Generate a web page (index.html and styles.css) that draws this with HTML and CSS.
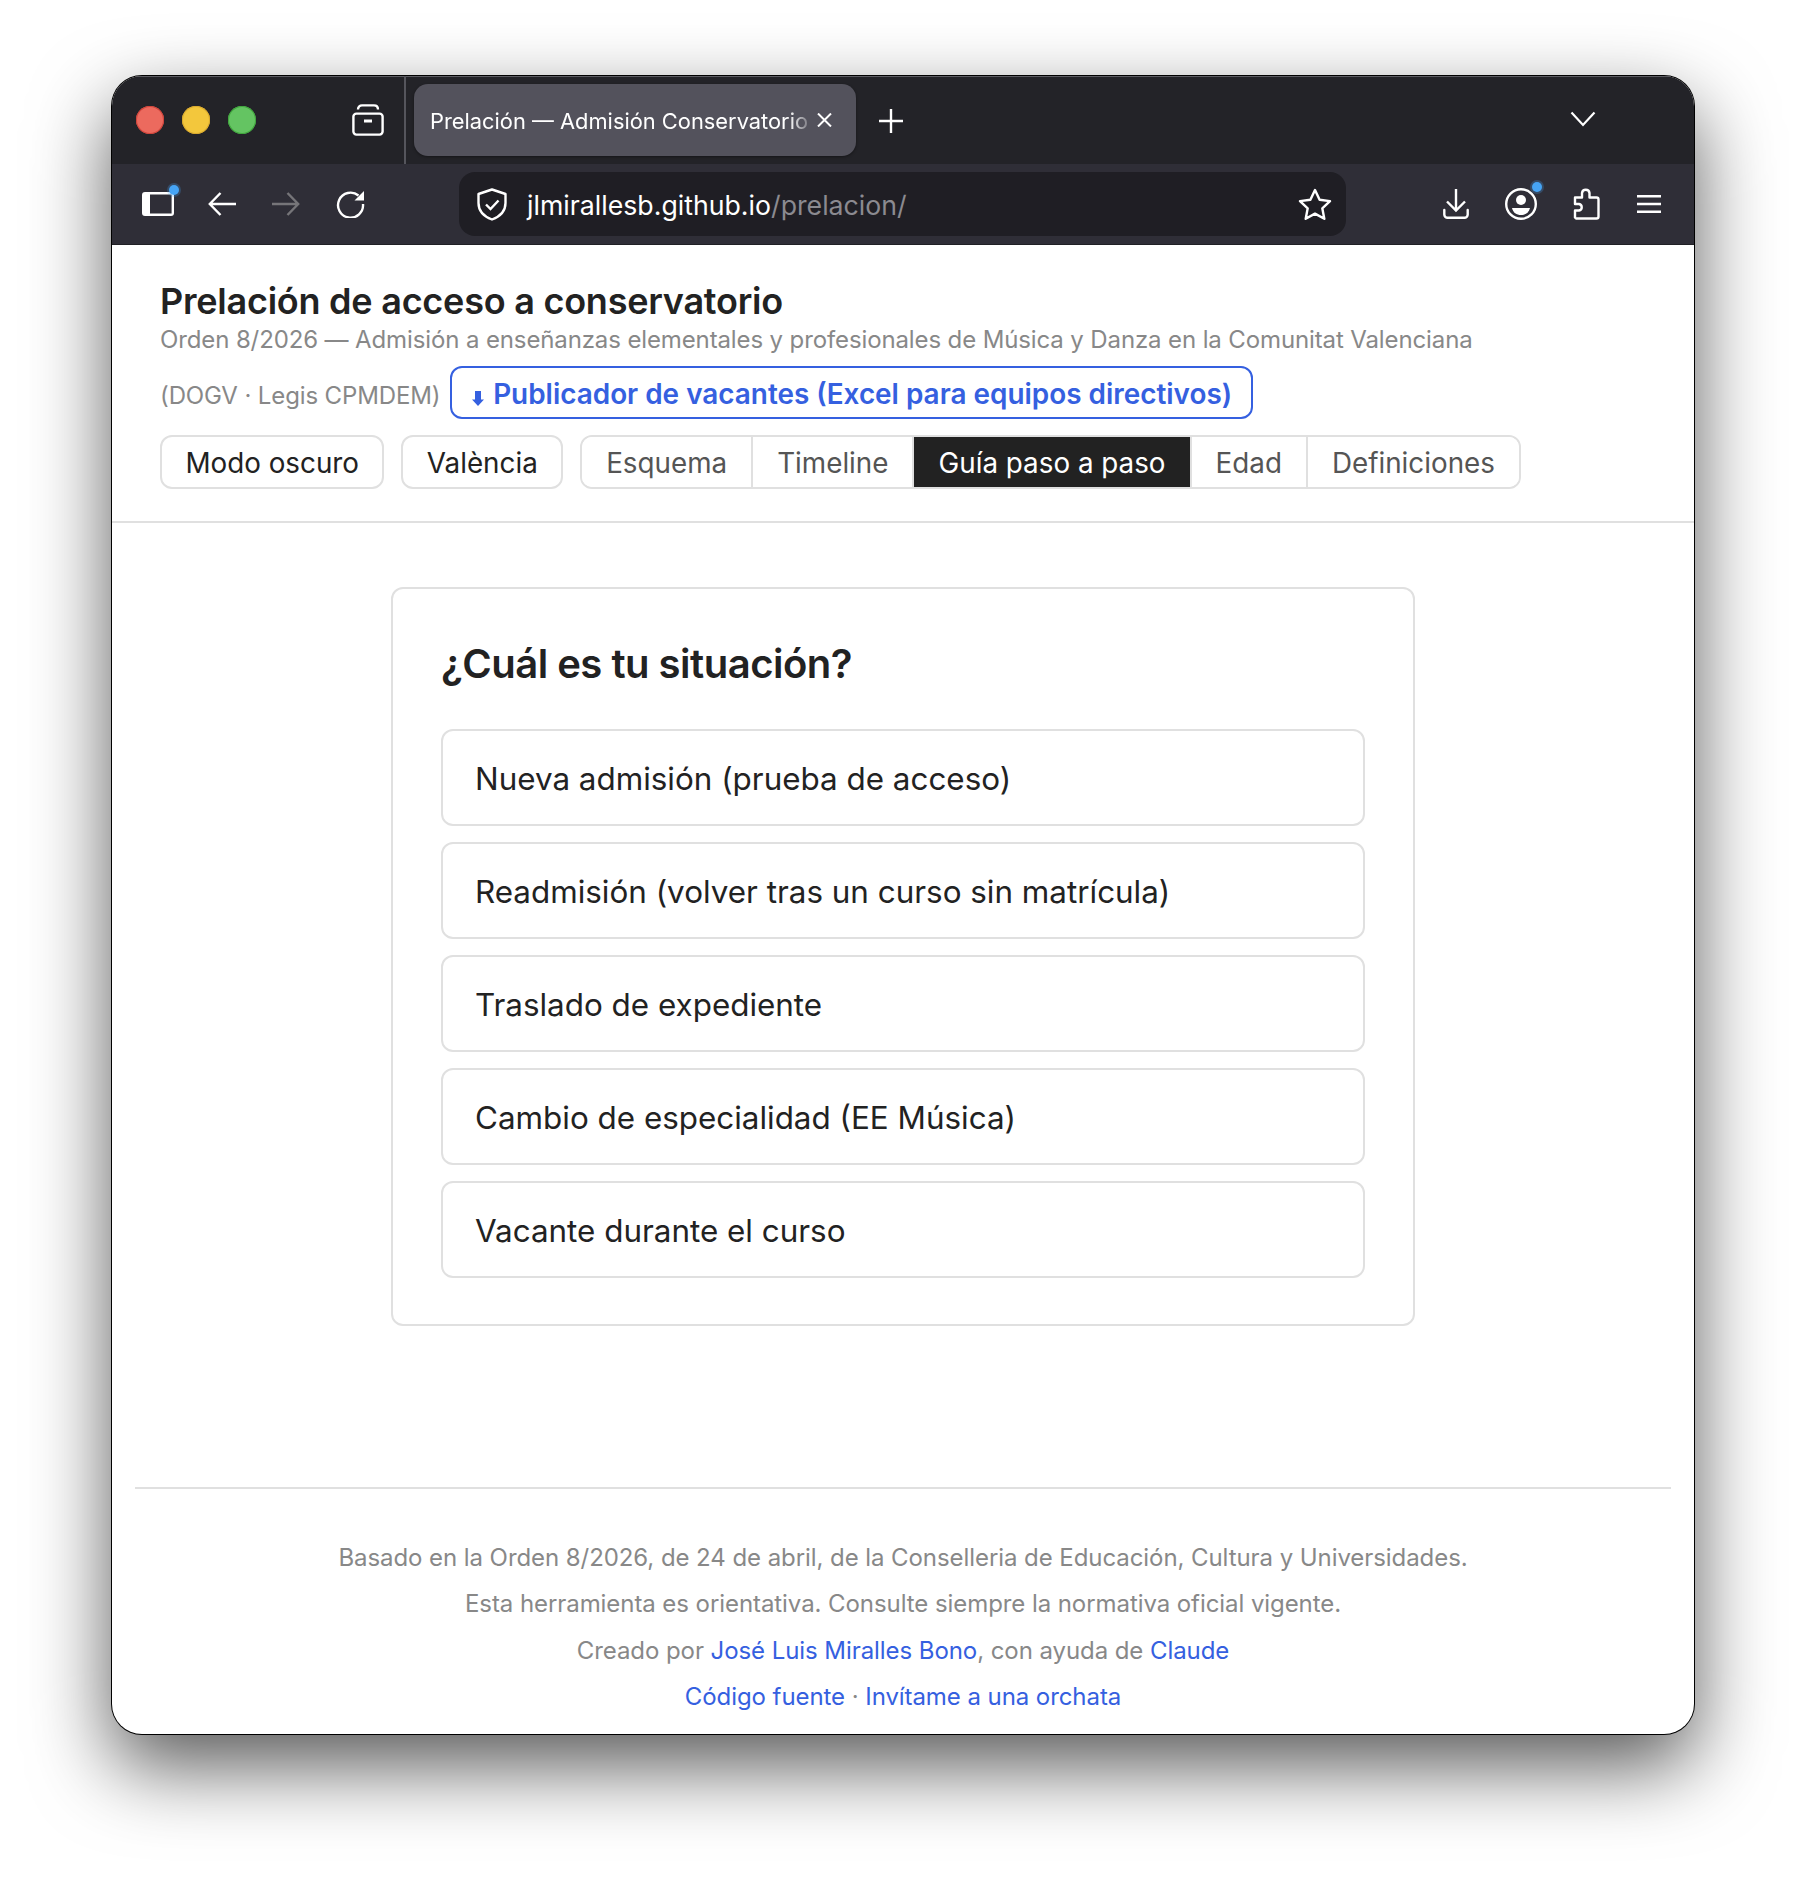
FILE: index.html
```html
<!DOCTYPE html>
<html lang="es">
<head>
<meta charset="utf-8">
<title>Prelación de acceso a conservatorio</title>
<link rel="stylesheet" href="styles.css">
</head>
<body>
<div class="window">
  <div class="tabbar">
    <div class="lights"><span class="light red"></span><span class="light yellow"></span><span class="light green"></span></div>
    <svg class="ico view" width="32" height="32" viewBox="0 0 32 32" fill="none" stroke="#fff" stroke-width="2.4"><path d="M6 5.500C6 2.500 8 1.400 10 1.400H22C24 1.400 26 2.500 26 5.500"/><rect x="1.400" y="9.600" width="29.200" height="21" rx="3"/><path d="M12 17h8" stroke-width="3"/></svg>
    <span class="sep"></span>
    <div class="tab">
      <span class="tab-title">Prelación — Admisión Conservatorio</span>
      <svg class="ico tab-x" width="15" height="14" viewBox="0 0 15 14" stroke="#fff" stroke-width="2"><path d="M1 .5l13 13M14 .5l-13 13"/></svg>
    </div>
    <svg class="ico plus" width="24" height="24" viewBox="0 0 24 24" stroke="#fff" stroke-width="2.400"><path d="M12 0v24M0 12h24"/></svg>
    <svg class="ico chev" width="26" height="16" viewBox="0 0 26 16" fill="none" stroke="#fff" stroke-width="2.200"><path d="M1.500 1.500L13 14 24.500 1.500"/></svg>
  </div>
  <div class="toolbar">
    <span class="badged sidebar">
      <svg class="ico" width="32" height="24" viewBox="0 0 32 24"><path fill="#fff" fill-rule="evenodd" d="M3 0H29a3 3 0 0 1 3 3V21a3 3 0 0 1-3 3H3a3 3 0 0 1-3-3V3a3 3 0 0 1 3-3ZM8 2.400V21.600H29.600V2.400Z"/></svg>
      <span class="dot"></span>
    </span>
    <svg class="ico back" width="28" height="24" viewBox="0 0 28 24" fill="none" stroke="#fff" stroke-width="2.400"><path d="M28 12H2M12.500 1L1.800 12 12.500 23"/></svg>
    <svg class="ico fwd" width="28" height="24" viewBox="0 0 28 24" fill="none" stroke="#767579" stroke-width="2.400"><path d="M0 12H26M15.500 1L26.200 12 15.500 23"/></svg>
    <svg class="ico reload" width="29" height="28" viewBox="0 0 29 28" fill="none"><path d="M22.500 5.500A12.500 12.500 0 1 0 27 14" stroke="#fff" stroke-width="2.400"/><path d="M28 1V10.500H18.500Z" fill="#fff"/></svg>
    <div class="urlbar">
      <svg class="ico" width="30" height="33" viewBox="0 0 30 33" fill="none" stroke="#fff" stroke-width="2.400"><path d="M15 1.500L28.500 6V15C28.500 23 23 28.500 15 31.500 7 28.500 1.500 23 1.500 15V6Z" stroke-linejoin="round"/><path d="M9 16.500l4.500 4.500 8-8.500"/></svg>
      <span class="url"><span class="host">jlmirallesb.github.io</span><span class="path">/prelacion/</span></span>
      <svg class="ico star" width="34" height="32" viewBox="0 0 34 32" fill="none" stroke="#fff" stroke-width="2.400" stroke-linejoin="round"><path d="M17 2l4.600 9.800 10.400 1.300-7.700 7.200 2 10.500L17 25.600 7.700 30.800l2-10.500L2 13.100l10.400-1.300Z"/></svg>
    </div>
    <svg class="ico dl" width="26" height="30" viewBox="0 0 26 30" fill="none" stroke="#fff" stroke-width="2.400"><path d="M13 0V21M4 12.500L13 21.500 22 12.500"/><path d="M1.300 21V25.500A3.300 3.300 0 0 0 4.600 28.800H21.400A3.300 3.300 0 0 0 24.700 25.500V21" stroke-linecap="round"/></svg>
    <span class="badged profile">
      <svg class="ico" width="32" height="32" viewBox="0 0 32 32"><circle cx="16" cy="16" r="14.800" fill="none" stroke="#fff" stroke-width="2.400"/><circle cx="16" cy="12" r="5" fill="#fff"/><path d="M7 20H25C24 24.500 20.500 27 16 27S8 24.500 7 20Z" fill="#fff"/></svg>
      <span class="dot"></span>
    </span>
    <svg class="ico puzzle" width="27" height="32" viewBox="0 0 27 32" fill="none" stroke="#fff" stroke-width="2.400" stroke-linejoin="round"><path d="M3 30.500H23.500A2 2 0 0 0 25.500 28.500V11.500A2 2 0 0 0 23.500 9.500H16.500V5A3.800 3.800 0 0 0 9 5V9.500H2V16H6A3.300 3.300 0 0 1 6 22.500H2V29.500Z"/></svg>
    <svg class="ico menu" width="24" height="18" viewBox="0 0 24 18" stroke="#fff" stroke-width="2.400"><path d="M0 1.200H24M0 9H24M0 16.800H24"/></svg>
  </div>
  <div class="page">
    <header class="head">
      <h1 class="title">Prelación de acceso a conservatorio</h1>
      <p class="sub">Orden 8/2026 — Admisión a enseñanzas elementales y profesionales de Música y Danza en la Comunitat Valenciana <span class="nowrap">(DOGV · Legis CPMDEM)</span> <a class="pub" href="#"><svg class="ico pub-arrow" width="12" height="15" viewBox="0 0 12 15" fill="#3560e0"><path d="M3 0H9V8.500H12L6 15 0 8.500H3Z"/></svg>Publicador de vacantes (Excel para equipos directivos)</a></p>
      <div class="controls">
        <button class="btn">Modo oscuro</button>
        <button class="btn">València</button>
        <div class="seg">
          <button class="seg-item">Esquema</button>
          <button class="seg-item">Timeline</button>
          <button class="seg-item active">Guía paso a paso</button>
          <button class="seg-item">Edad</button>
          <button class="seg-item">Definiciones</button>
        </div>
      </div>
    </header>
    <main class="card">
      <h2 class="q">¿Cuál es tu situación?</h2>
      <div class="opts">
        <button class="opt">Nueva admisión (prueba de acceso)</button>
        <button class="opt">Readmisión (volver tras un curso sin matrícula)</button>
        <button class="opt">Traslado de expediente</button>
        <button class="opt">Cambio de especialidad (EE Música)</button>
        <button class="opt">Vacante durante el curso</button>
      </div>
    </main>
    <footer class="foot">
      <p>Basado en la Orden 8/2026, de 24 de abril, de la Conselleria de Educación, Cultura y Universidades.</p>
      <p>Esta herramienta es orientativa. Consulte siempre la normativa oficial vigente.</p>
      <p>Creado por <a href="#">José Luis Miralles Bono</a>, con ayuda de <a href="#">Claude</a></p>
      <p><a href="#">Código fuente</a> · <a href="#">Invítame a una orchata</a></p>
    </footer>
  </div>
</div>
</body>
</html>
```
FILE: styles.css
```css
* { box-sizing: border-box; }
html, body { margin: 0; padding: 0; }
body {
  width: 1806px;
  height: 1882px;
  padding: 76px 112px 0;
  background: #fff;
  font-family: "Inter", "Liberation Sans", sans-serif;
  overflow: hidden;
}
.window {
  width: 1582px;
  height: 1658px;
  border-radius: 30px;
  overflow: hidden;
  background: #fff;
  box-shadow: 0 0 0 1px #000, 0 32px 80px rgba(0,0,0,.66);
  display: flex;
  flex-direction: column;
}
.ico { display: block; flex: none; }

/* tab strip */
.tabbar {
  height: 88px;
  flex: none;
  display: flex;
  align-items: center;
  background: #232328;
  box-shadow: inset 0 1px 0 #5c5c62;
  padding-left: 24px;
}
.lights { display: flex; gap: 18px; }
.light { width: 28px; height: 28px; border-radius: 50%; }
.red { background: #ec6a5e; box-shadow: inset 0 0 0 1px #d0433a; }
.yellow { background: #f3c73c; box-shadow: inset 0 0 0 1px #d9a92e; }
.green { background: #64c462; box-shadow: inset 0 0 0 1px #3fa63c; }
.view { margin-left: 96px; }
.sep { width: 2px; align-self: stretch; margin-left: 20px; background: #55555c; }
.tab {
  width: 442px;
  height: 72px;
  margin-left: 8px;
  padding: 0 14px 0 16px;
  display: flex;
  align-items: center;
  border-radius: 14px;
  background: #53525c;
  box-shadow: 0 1px 3px rgba(0,0,0,.4);
}
.tab-title {
  width: 378px;
  flex: none;
  padding-top: 2px;
  white-space: nowrap;
  color: #fff;
  font-size: 21.85px;
  -webkit-mask-image: linear-gradient(to right, #000 95%, rgba(0,0,0,.25));
  mask-image: linear-gradient(to right, #000 95%, rgba(0,0,0,.25));
}
.tab-x { margin-left: 9px; }
.plus { margin-left: 23px; margin-top: 2px; }
.chev { margin-left: auto; margin-right: 98px; margin-bottom: 2px; }

/* toolbar */
.toolbar {
  height: 81px;
  flex: none;
  display: flex;
  align-items: center;
  background: #2f2e37;
  border-bottom: 1px solid #202025;
  padding-left: 30px;
}
.badged { position: relative; display: block; flex: none; }
.dot {
  position: absolute;
  width: 10px;
  height: 10px;
  border-radius: 50%;
  background: #46a4f5;
  box-shadow: 0 0 0 2px rgba(70,164,245,.25);
}
.sidebar .dot { top: -7px; right: -5px; }
.profile .dot { top: -6px; right: -5px; }
.back { margin-left: 34px; }
.fwd { margin-left: 36px; }
.reload { margin-left: 36px; }
.urlbar {
  width: 887px;
  height: 64px;
  margin-left: 94px;
  padding: 0 14px 0 18px;
  display: flex;
  align-items: center;
  border-radius: 16px;
  background: #1f1e24;
}
.url { margin-left: 20px; padding-top: 2px; font-size: 26.7px; white-space: nowrap; flex: 1; }
.host { color: #fff; }
.path { color: #8b8a90; }
.dl { margin-left: 97px; }
.profile { margin-left: 36px; }
.puzzle { margin-left: 35.500px; }
.menu { margin-left: 37.500px; }

/* page */
.page { flex: 1; display: flex; flex-direction: column; min-height: 0; }
.head {
  padding: 36px 48px 32px;
  border-bottom: 2px solid #e0e0e0;
}
.title {
  margin: 0;
  font-size: 36px;
  line-height: 40px;
  font-weight: 600;
  letter-spacing: -.24px;
  color: #222;
}
.sub {
  margin: 3px 0 0;
  font-size: 24px;
  letter-spacing: -.12px;
  line-height: 32px;
  color: #888;
}
.nowrap { white-space: nowrap; }
.pub {
  display: inline-block;
  height: 53px;
  margin: 10px 0 0 3px;
  padding: 0 19px 0 20px;
  border: 2px solid #3560e0;
  border-radius: 12px;
  color: #3560e0;
  font-size: 27.9px;
  letter-spacing: 0;
  line-height: 53px;
  font-weight: 600;
  text-decoration: none;
}
.pub-arrow { display: inline-block; margin-right: 9px; vertical-align: -2px; }
.controls { display: flex; gap: 17px; margin-top: 16px; }
.btn, .seg-item, .opt { font-family: inherit; cursor: pointer; background: #fff; }
.btn {
  height: 54px;
  padding: 2px 23.400px 0;
  border: 2px solid #e0e0e0;
  border-radius: 12px;
  color: #222;
  font-size: 27.8px;
  font-weight: 400;
}
.seg {
  display: flex;
  height: 54px;
  border: 2px solid #e0e0e0;
  border-radius: 12px;
  overflow: hidden;
}
.seg-item {
  height: 50px;
  padding: 2px 24px 0;
  border: 0;
  border-right: 2px solid #e0e0e0;
  color: #555;
  font-size: 27.8px;
  font-weight: 400;
}
.seg-item:last-child { border-right: 0; }
.seg-item.active { background: #222; color: #fff; }

.card {
  width: 1024px;
  margin: 64px auto 0;
  padding: 52px 48px 46px;
  border: 2px solid #e0e0e0;
  border-radius: 12px;
}
.q {
  margin: 0 0 42px;
  font-size: 40px;
  letter-spacing: -.5px;
  line-height: 46px;
  font-weight: 600;
  color: #222;
}
.opts { display: flex; flex-direction: column; gap: 16px; }
.opt {
  height: 97px;
  padding: 2px 32px 0;
  border: 2px solid #e0e0e0;
  border-radius: 12px;
  text-align: left;
  color: #222;
  font-size: 31.4px;
  font-weight: 400;
}
.foot {
  margin: 161px 23px 0;
  padding-top: 46px;
  border-top: 2px solid #e0e0e0;
  text-align: center;
  color: #888;
  font-size: 24px;
  letter-spacing: -.07px;
  line-height: 46.3px;
}
.foot p { margin: 0; }
.foot a { color: #3560e0; text-decoration: none; }
```
